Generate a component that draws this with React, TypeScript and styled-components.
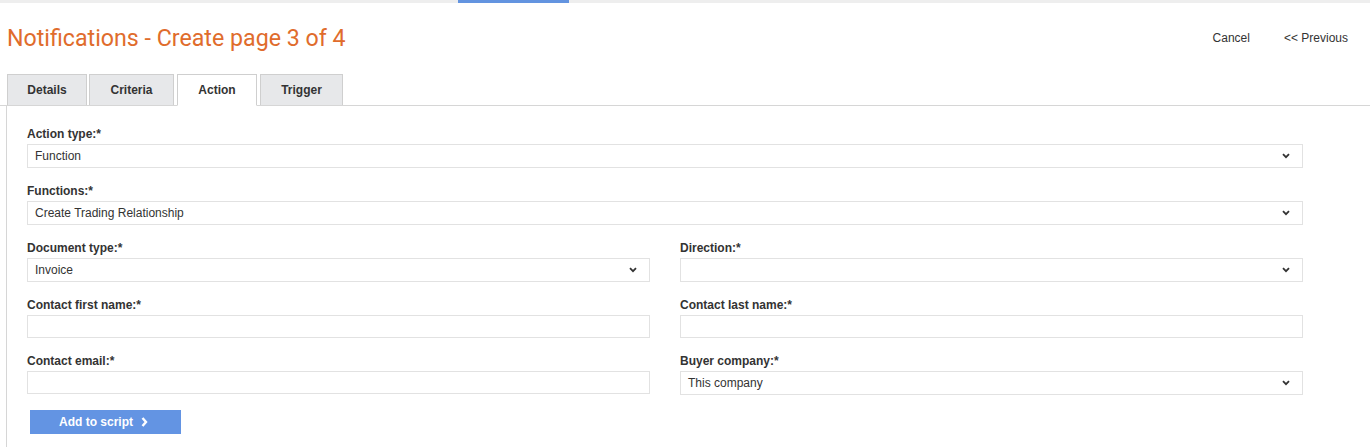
import React from "react";
import styled, { createGlobalStyle } from "styled-components";

const GlobalStyle = createGlobalStyle`
  html, body { margin: 0; padding: 0; background: #fff; }
  body { font-family: "Liberation Sans", Arial, sans-serif; color: #333; }
  * { box-sizing: border-box; }
`;

const Page = styled.div`
  width: 1370px;
  min-height: 447px;
  display: flex;
  flex-direction: column;
`;

const TopBar = styled.div`
  height: 3px;
  background: #eeeeee;
  display: flex;
`;

const TopIndicator = styled.div`
  margin-left: 458px;
  width: 111px;
  height: 3px;
  background: #6394e0;
`;

const Header = styled.div`
  display: flex;
  align-items: center;
  justify-content: space-between;
  height: 71px;
  padding: 0 22px 0 7px;
`;

const Title = styled.h1`
  margin: 0;
  font-family: Roboto, "Liberation Sans", sans-serif;
  font-weight: 400;
  font-size: 23.2px;
  color: #e06c2c;
  padding-bottom: 2px;
`;

const HeaderLinks = styled.div`
  display: flex;
  gap: 34px;
  padding-bottom: 2px;
`;

const HeaderLink = styled.a`
  font-size: 12px;
  color: #333;
  text-decoration: none;
  cursor: pointer;
`;

const TabBar = styled.div`
  display: flex;
  align-items: flex-end;
  padding-left: 7px;
  border-bottom: 1px solid #d6d6d6;
  height: 32px;
`;

const Tab = styled.div<{ $active?: boolean; $gap: number; $width: number }>`
  width: ${(p) => p.$width}px;
  height: ${(p) => (p.$active ? 32 : 31)}px;
  margin-right: ${(p) => p.$gap}px;
  margin-bottom: ${(p) => (p.$active ? -1 : 0)}px;
  display: flex;
  align-items: center;
  justify-content: center;
  font-size: 12px;
  font-weight: bold;
  color: #333;
  background: ${(p) => (p.$active ? "#ffffff" : "#e7e8ea")};
  border: 1px solid #cfcfcf;
  border-bottom: ${(p) => (p.$active ? "1px solid #fff" : "none")};
`;

const Panel = styled.div`
  flex: 1;
  margin-left: 6px;
  border-left: 1px solid #d6d6d6;
  padding: 20px 60px 13px 20px;
  display: flex;
  flex-direction: column;
`;

const Form = styled.div`
  display: grid;
  grid-template-columns: 623px 623px;
  column-gap: 30px;
  row-gap: 15px;
`;

const Field = styled.div<{ $full?: boolean }>`
  display: flex;
  flex-direction: column;
  grid-column: ${(p) => (p.$full ? "1 / -1" : "auto")};
`;

const Label = styled.label`
  font-size: 12px;
  font-weight: bold;
  color: #333;
  line-height: 16px;
  margin-bottom: 2px;
`;

const SelectBox = styled.div`
  height: 24px;
  border: 1px solid #e2e2e2;
  display: flex;
  align-items: center;
  justify-content: space-between;
  padding: 0 12px 0 7px;
  font-size: 12px;
  color: #333;
  background: #fff;
`;

const TextInput = styled.input`
  height: 23px;
  border: 1px solid #e2e2e2;
  padding: 0 7px;
  font-size: 12px;
  font-family: inherit;
  outline: none;
  background: #fff;
`;

const Button = styled.button`
  margin: 15px 0 0 3px;
  align-self: flex-start;
  width: 151px;
  height: 24px;
  border: none;
  background: #6394e3;
  color: #fff;
  font-family: inherit;
  font-size: 12px;
  font-weight: bold;
  display: flex;
  align-items: center;
  justify-content: center;
  gap: 8px;
  cursor: pointer;
  padding: 0 4px 0 0;
`;

const Chevron = () => (
  <svg width="8" height="6" viewBox="0 0 8 6">
    <polyline points="1,1.2 4,4.2 7,1.2" fill="none" stroke="#333" strokeWidth="1.8" />
  </svg>
);

const RightChevron = () => (
  <svg width="7" height="10" viewBox="0 0 7 10">
    <polyline points="1.5,1 5,5 1.5,9" fill="none" stroke="#fff" strokeWidth="2.4" />
  </svg>
);

const Select = ({ value }: { value?: string }) => (
  <SelectBox>
    <span>{value ?? ""}</span>
    <Chevron />
  </SelectBox>
);

export default function App() {
  const tabs = [
    { name: "Details", gap: 2, width: 80 },
    { name: "Criteria", gap: 3, width: 85 },
    { name: "Action", gap: 3, width: 80, active: true },
    { name: "Trigger", gap: 0, width: 83 },
  ];
  return (
    <>
      <GlobalStyle />
      <Page>
        <TopBar>
          <TopIndicator />
        </TopBar>
        <Header>
          <Title>Notifications - Create page 3 of 4</Title>
          <HeaderLinks>
            <HeaderLink>Cancel</HeaderLink>
            <HeaderLink>&lt;&lt; Previous</HeaderLink>
          </HeaderLinks>
        </Header>
        <TabBar>
          {tabs.map((t) => (
            <Tab key={t.name} $active={t.active} $gap={t.gap} $width={t.width}>
              {t.name}
            </Tab>
          ))}
        </TabBar>
        <Panel>
          <Form>
            <Field $full>
              <Label>Action type:*</Label>
              <Select value="Function" />
            </Field>
            <Field $full>
              <Label>Functions:*</Label>
              <Select value="Create Trading Relationship" />
            </Field>
            <Field>
              <Label>Document type:*</Label>
              <Select value="Invoice" />
            </Field>
            <Field>
              <Label>Direction:*</Label>
              <Select />
            </Field>
            <Field>
              <Label>Contact first name:*</Label>
              <TextInput />
            </Field>
            <Field>
              <Label>Contact last name:*</Label>
              <TextInput />
            </Field>
            <Field>
              <Label>Contact email:*</Label>
              <TextInput />
            </Field>
            <Field>
              <Label>Buyer company:*</Label>
              <Select value="This company" />
            </Field>
          </Form>
          <Button>
            Add to script <RightChevron />
          </Button>
        </Panel>
      </Page>
    </>
  );
}
